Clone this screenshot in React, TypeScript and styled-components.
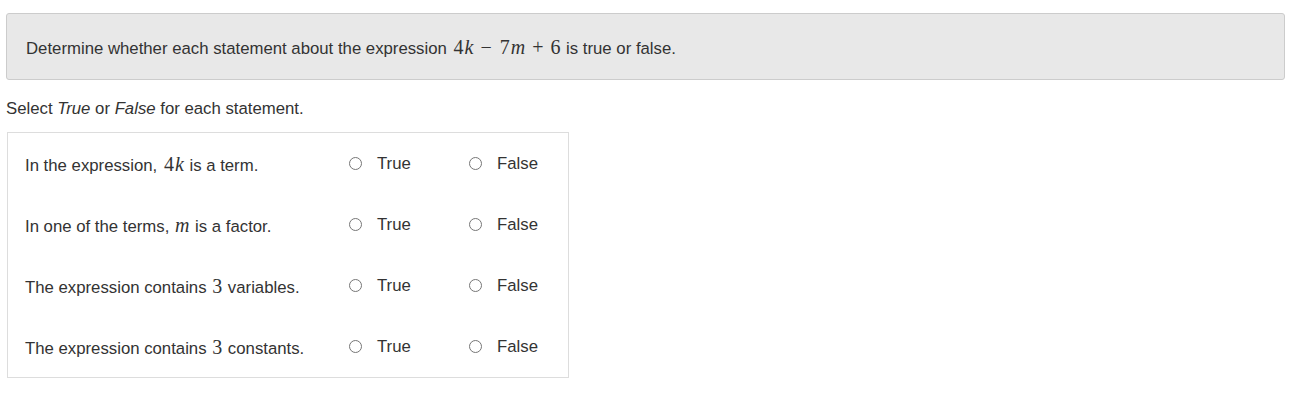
import styled, { createGlobalStyle } from "styled-components"

const GlobalStyle = createGlobalStyle`
    html, body {
        margin: 0;
        padding: 0;
        background: #ffffff;
    }
    body {
        font-family: "Liberation Sans", Arial, sans-serif;
        color: #333333;
    }
`

const Page = styled.div`
    display: flex;
    flex-direction: column;
    padding: 13px 8px 0 6px;
`

const Prompt = styled.div`
    display: flex;
    align-items: center;
    height: 67px;
    padding: 2px 19px 0 19px;
    box-sizing: border-box;
    background: #e8e8e8;
    border: 1px solid #cccccc;
    border-radius: 3px;
    font-size: 16.75px;
`

const Instructions = styled.div`
    margin-top: 19px;
    font-size: 16.75px;
    line-height: 20px;
`

const Table = styled.div`
    display: grid;
    grid-template-columns: 341px 120px 100px;
    width: 562px;
    margin-top: 13px;
    margin-left: 1px;
    border: 1px solid #dddddd;
    box-sizing: border-box;
`

const LabelCell = styled.div`
    display: flex;
    align-items: center;
    height: 61px;
    padding-left: 17px;
    padding-top: 2px;
    box-sizing: border-box;
    font-size: 16.75px;
`

const OptionCell = styled.label`
    display: flex;
    align-items: center;
    gap: 15px;
    height: 61px;
    font-size: 16.75px;
    cursor: pointer;
`

const Radio = styled.span`
    display: inline-block;
    width: 11px;
    height: 11px;
    border: 1px solid #767676;
    border-radius: 50%;
    background: #ffffff;
`

const Math = styled.span`
    font-family: "Liberation Serif", "DejaVu Serif", serif;
    font-style: italic;
    font-size: 20px;
    margin: 0 1px;
`

const MathOp = styled.span`
    font-family: "Liberation Serif", "DejaVu Serif", serif;
    font-size: 20px;
    margin: 0 6px;
`

const Num = styled.span`
    font-family: "Liberation Serif", "DejaVu Serif", serif;
    font-style: normal;
    font-size: 20px;
    margin: 0 1px;
`

const rows = [
    <>In the expression, <Math><Num>4</Num>k</Math> is a term.</>,
    <>In one of the terms, <Math>m</Math> is a factor.</>,
    <>The expression contains <Num>3</Num> variables.</>,
    <>The expression contains <Num>3</Num> constants.</>,
]

export default function App() {
    return (
        <>
            <GlobalStyle />
            <Page>
                <Prompt>
                    <span>
                        Determine whether each statement about the expression{" "}
                        <Math><Num>4</Num>k</Math>
                        <MathOp>−</MathOp>
                        <Math><Num>7</Num>m</Math>
                        <MathOp>+</MathOp>
                        <Num>6</Num> is true or false.
                    </span>
                </Prompt>
                <Instructions>
                    Select <i>True</i> or <i>False</i> for each statement.
                </Instructions>
                <Table>
                    {rows.map((row, idx) => (
                        <div key={idx} style={{ display: "contents" }}>
                            <LabelCell><span>{row}</span></LabelCell>
                            <OptionCell>
                                <Radio />
                                True
                            </OptionCell>
                            <OptionCell>
                                <Radio />
                                False
                            </OptionCell>
                        </div>
                    ))}
                </Table>
            </Page>
        </>
    )
}
